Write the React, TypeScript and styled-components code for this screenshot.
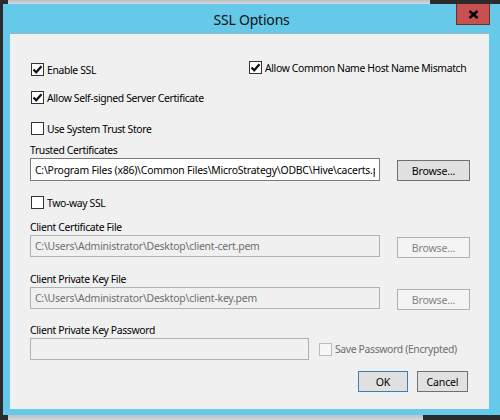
import { createGlobalStyle, styled } from 'styled-components';

const GlobalStyle = createGlobalStyle`
  html, body {
    margin: 0;
    padding: 0;
    background: #2b2b2b;
  }
  #root {
    width: 500px;
    height: 420px;
    overflow: hidden;
  }
  * {
    box-sizing: border-box;
  }
`;

const FONT = `"Noto Sans", "Open Sans", "DejaVu Sans", sans-serif`;

const Desktop = styled.div`
  display: flex;
  flex-direction: column;
  width: 500px;
  height: 420px;
  background: #2b2b2b;
  font-family: ${FONT};
  font-size: 10.4px;
  letter-spacing: -0.35px;
  color: #000;
`;

const Strip = styled.div<{ $h: number }>`
  height: ${(p) => p.$h}px;
  display: flex;
  flex-shrink: 0;
`;

const BehindWindow = styled.div<{ $left: number; $width: number }>`
  margin-left: ${(p) => p.$left}px;
  width: ${(p) => p.$width}px;
  background: linear-gradient(#b9c1c6, #d3d9dc);
`;

const Window = styled.div`
  margin-left: 3px;
  width: 497px;
  height: 411px;
  flex-shrink: 0;
  background: #65c9ea;
  display: flex;
  flex-direction: column;
`;

const TitleBar = styled.div`
  height: 30px;
  display: grid;
  grid-template-columns: 1fr auto 1fr;
  align-items: start;
`;

const Title = styled.div`
  grid-column: 2;
  padding-top: 6px;
  font-size: 14px;
  letter-spacing: -0.2px;
  color: #111;
`;

const CloseButton = styled.div`
  grid-column: 3;
  justify-self: end;
  margin-right: 10px;
  width: 34px;
  height: 21px;
  background: #c75050;
  border: 1px solid #6e2e2e;
  border-top: none;
  display: flex;
  align-items: center;
  justify-content: center;
`;

const Panel = styled.div`
  margin: 0 11px 0 7px;
  height: 375px;
  background: #f0f0f0;
  box-shadow: 0 -1px 0 #9fb3c0;
  padding: 29px 19px 0 20px;
  display: flex;
  flex-direction: column;
`;

const TopRow = styled.div`
  display: grid;
  grid-template-columns: 218px 1fr;
`;

const CheckRow = styled.label<{ $mt?: number; $disabled?: boolean }>`
  display: flex;
  align-items: center;
  gap: 3px;
  height: 13px;
  margin-top: ${(p) => p.$mt ?? 0}px;
  padding-left: 1px;
  color: ${(p) => (p.$disabled ? '#6d6d6d' : '#000')};
  white-space: nowrap;
`;

const Box = styled.span<{ $disabled?: boolean }>`
  width: 13px;
  height: 13px;
  flex-shrink: 0;
  border: 1px solid ${(p) => (p.$disabled ? '#bcbcbc' : '#333')};
  background: ${(p) => (p.$disabled ? '#f7f7f7' : '#fff')};
  display: flex;
  align-items: center;
  justify-content: center;
`;

const FieldLabel = styled.div<{ $mt: number }>`
  margin-top: ${(p) => p.$mt}px;
  height: 16px;
  line-height: 16px;
  white-space: nowrap;
`;

const FieldRow = styled.div<{ $mt: number }>`
  margin-top: ${(p) => p.$mt}px;
  display: flex;
  align-items: flex-start;
  gap: 17px;
`;

const TextBox = styled.input<{ $w: number; $h: number }>`
  width: ${(p) => p.$w}px;
  height: ${(p) => p.$h}px;
  flex-shrink: 0;
  padding: 0 4px;
  margin: 0;
  font-family: ${FONT};
  font-size: 10.4px;
  letter-spacing: -0.2px;
  color: #000;
  background: #fff;
  border: 1px solid #7a7a7a;
  outline: none;

  &:disabled {
    background: #f0f0f0;
    border-color: #adb2b5;
    color: #6d6d6d;
  }
`;

const Button = styled.button<{ $w: number; $default?: boolean }>`
  width: ${(p) => p.$w}px;
  height: 21px;
  flex-shrink: 0;
  padding: 0;
  margin: 0;
  font-family: ${FONT};
  font-size: 10.6px;
  letter-spacing: -0.2px;
  color: #000;
  background: #e1e1e1;
  border: 1px solid ${(p) => (p.$default ? '#3c7fb1' : '#707070')};
  border-radius: 0;

  &:disabled {
    background: #f4f4f4;
    border-color: #adb2b5;
    color: #838383;
  }
`;

const BrowseButton = styled(Button)`
  margin-top: 2px;
`;

const PasswordRow = styled.div`
  display: flex;
  align-items: center;
  gap: 9px;
`;

const Footer = styled.div`
  margin-top: 11px;
  display: flex;
  justify-content: flex-end;
  gap: 9px;
  padding-right: 2px;
`;

const CheckMark = () => (
  <svg width="11" height="11" viewBox="0 0 11 11" aria-hidden>
    <path d="M1.5 5.5 L4.2 8.3 L9.5 2.2" fill="none" stroke="#111" strokeWidth="2.2" />
  </svg>
);

const Check = ({ label, checked, disabled, mt }: { label: string; checked?: boolean; disabled?: boolean; mt?: number }) => (
  <CheckRow $mt={mt} $disabled={disabled}>
    <Box $disabled={disabled}>{checked && <CheckMark />}</Box>
    {label}
  </CheckRow>
);

const App = () => {
  return (
    <>
      <GlobalStyle />
      <Desktop>
        <Strip $h={4}>
          <BehindWindow $left={8} $width={422} />
        </Strip>
        <Window>
          <TitleBar>
            <Title>SSL Options</Title>
            <CloseButton>
              <svg width="11" height="9" viewBox="0 0 11 9" aria-hidden>
                <path d="M1.5 1 L9.5 8 M9.5 1 L1.5 8" stroke="#000" strokeWidth="2.4" />
              </svg>
            </CloseButton>
          </TitleBar>
          <Panel>
            <TopRow>
              <Check label="Enable SSL" checked />
              <Check label="Allow Common Name Host Name Mismatch" checked mt={-2} />
            </TopRow>
            <Check label="Allow Self-signed Server Certificate" checked mt={15} />
            <Check label="Use System Trust Store" mt={18} />

            <FieldLabel $mt={7}>Trusted Certificates</FieldLabel>
            <FieldRow $mt={0}>
              <TextBox
                $w={350}
                $h={23}
                readOnly
                value="C:\Program Files (x86)\Common Files\MicroStrategy\ODBC\Hive\cacerts.pem"
              />
              <BrowseButton $w={73}>Browse...</BrowseButton>
            </FieldRow>

            <Check label="Two-way SSL" mt={15} />

            <FieldLabel $mt={10}>Client Certificate File</FieldLabel>
            <FieldRow $mt={0}>
              <TextBox $w={350} $h={22} disabled value="C:\Users\Administrator\Desktop\client-cert.pem" />
              <BrowseButton $w={73} disabled>
                Browse...
              </BrowseButton>
            </FieldRow>

            <FieldLabel $mt={13}>Client Private Key File</FieldLabel>
            <FieldRow $mt={0}>
              <TextBox $w={350} $h={22} disabled value="C:\Users\Administrator\Desktop\client-key.pem" />
              <BrowseButton $w={73} disabled>
                Browse...
              </BrowseButton>
            </FieldRow>

            <FieldLabel $mt={12}>Client Private Key Password</FieldLabel>
            <PasswordRow>
              <TextBox $w={279} $h={22} disabled type="password" value="" />
              <Check label="Save Password (Encrypted)" disabled />
            </PasswordRow>

            <Footer>
              <Button $w={50} $default>
                OK
              </Button>
              <Button $w={51}>Cancel</Button>
            </Footer>
          </Panel>
        </Window>
        <Strip $h={5}>
          <BehindWindow $left={8} $width={415} />
        </Strip>
      </Desktop>
    </>
  );
};

export default App;
